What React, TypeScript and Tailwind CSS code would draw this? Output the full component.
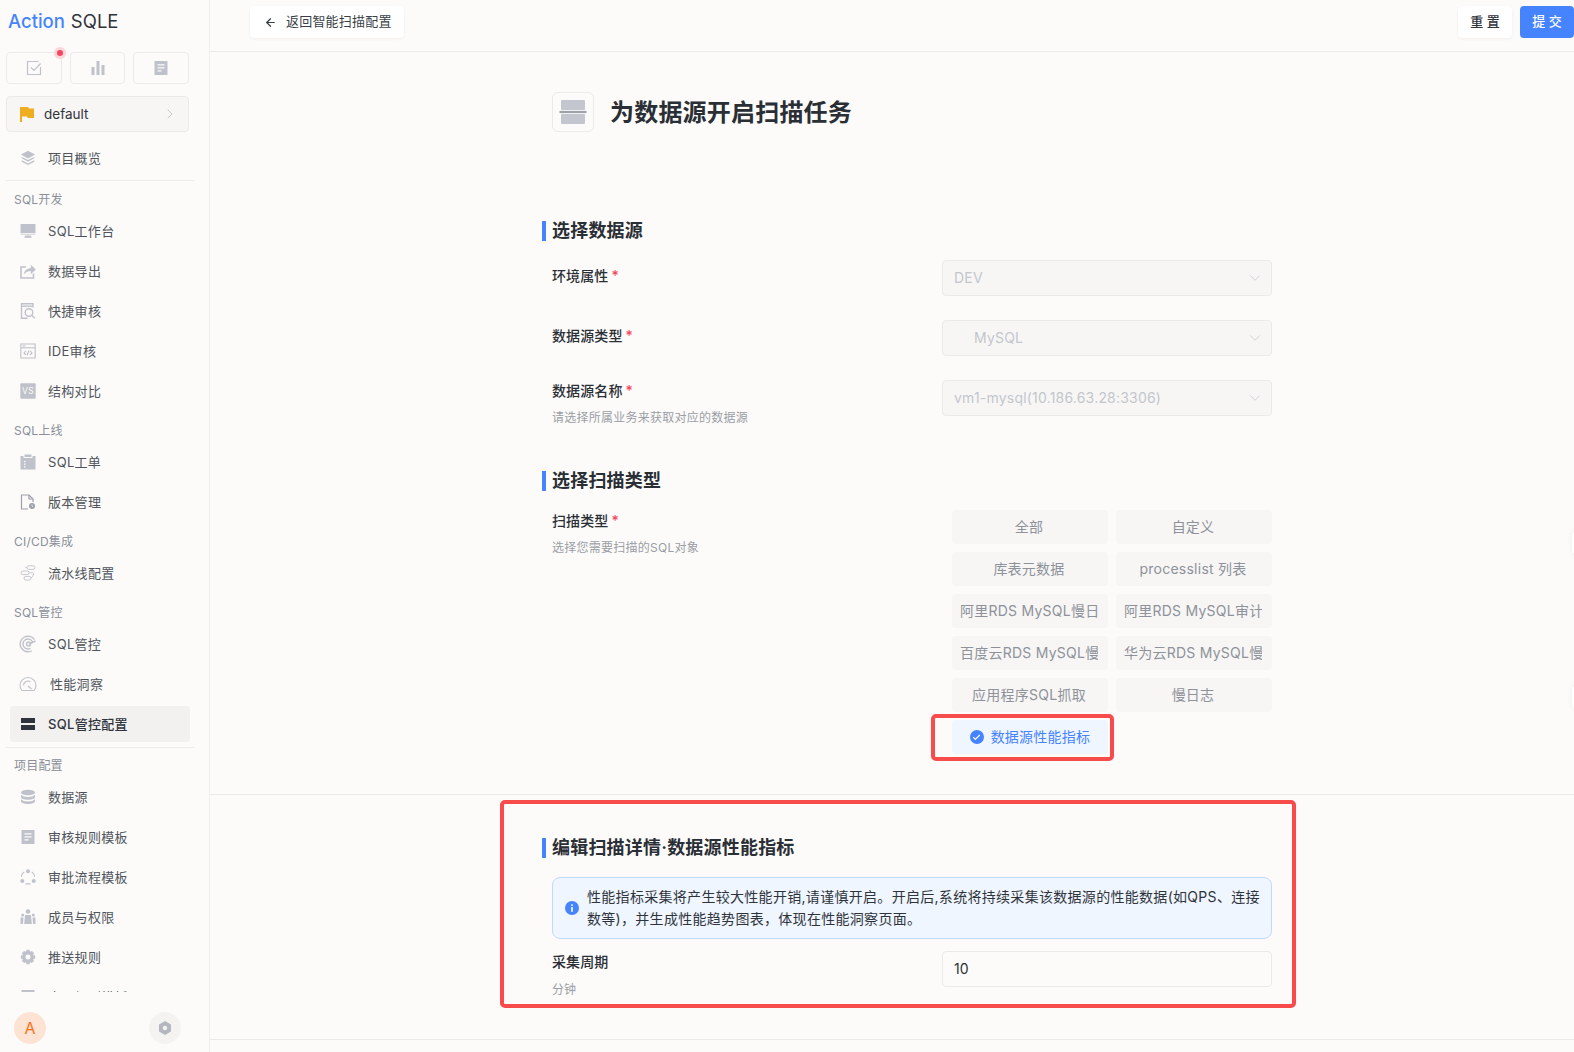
import type { ReactNode } from 'react';
import { ArrowLeft, ChevronDown, ChevronRight, Check } from 'lucide-react';

const ic = 'w-[16px] h-[16px] text-[#bfc2ca]';

const Icons: Record<string, ReactNode> = {
  layers: (
    <svg viewBox="0 0 16 16" className={ic} fill="currentColor">
      <path d="M8 0.800 15 4.600 8 8.400 1 4.600Z" />
      <path d="M2.600 7.200 8 10.100l5.400-2.900 1.400.8L8 11.700 1.200 8Z" />
      <path d="M2.600 10.600 8 13.500l5.400-2.900 1.400.8L8 15.100 1.200 11.400Z" />
    </svg>
  ),
  monitor: (
    <svg viewBox="0 0 16 16" className={ic} fill="currentColor">
      <path d="M0.500 1h15v9h-15Z" />
      <path d="M0.500 10.800h15V12h-15Z" opacity="0.600" />
      <path d="M5.500 12.500h5l1.500 2.200H4Z" />
    </svg>
  ),
  share: (
    <svg viewBox="0 0 16 16" className={ic} fill="none" stroke="currentColor" strokeWidth="1.600">
      <path d="M6 4H1v11h12.500v-4.500" />
      <path d="M3.800 11.500C4.300 7.500 7 5.200 10.800 5.200V1.800L15.800 6.500l-5 4.700V8C8 8 5.600 9 3.800 11.500Z" fill="currentColor" stroke="none" />
    </svg>
  ),
  audit: (
    <svg viewBox="0 0 16 16" className={ic} fill="none" stroke="currentColor" strokeWidth="1.400">
      <path d="M13 4.500V0.800H1.500v14.400h6" />
      <path d="M1.500 3.200H13" />
      <circle cx="9" cy="9.500" r="3.800" />
      <path d="m11.800 12.300 3 2.900" />
    </svg>
  ),
  ide: (
    <svg viewBox="0 0 16 16" className={ic} fill="none" stroke="currentColor" strokeWidth="1.100">
      <path d="M0.800 1h14.400v14H0.800Z" />
      <path d="M0.800 4.800h14.400" />
      <path d="M2.500 2.900h3" />
      <path d="m6 7.800-2 2.100 2 2.100M10 7.800l2 2.100-2 2.100M8.900 7.500l-1.800 4.800" />
    </svg>
  ),
  vs: (
    <svg viewBox="0 0 16 16" className={ic}>
      <rect x="0.300" y="0.300" width="15.400" height="15.400" rx="1" fill="currentColor" />
      <text x="8" y="11" fontSize="8.500" textAnchor="middle" fill="#fcfbf9" fontFamily="Inter, sans-serif">VS</text>
    </svg>
  ),
  clipboard: (
    <svg viewBox="0 0 16 16" className={ic} fill="currentColor">
      <path d="M0.500 2h3v2h9V2h3v13.500H0.500Z" />
      <path d="M4.500 0.500h7V3h-7Z" />
      <path d="M4 7h1.500v1.200H4ZM4 9.600h1.500v1.200H4ZM4 12.200h1.500v1.200H4Z" fill="#fcfbf9" />
    </svg>
  ),
  version: (
    <svg viewBox="0 0 16 16" className={ic} fill="none" stroke="#9ca0a8" strokeWidth="1.200">
      <path d="M8 15H1.500V1H9l4 4v3" />
      <path d="M9 1v4h4" />
      <circle cx="12" cy="12" r="3" fill="#9ca0a8" stroke="none" />
      <path d="M12 10.500V12l1 .8" stroke="#fcfbf9" strokeWidth="0.800" />
    </svg>
  ),
  pipeline: (
    <svg viewBox="0 0 16 16" className={ic} fill="none" stroke="currentColor" strokeWidth="0.900">
      <rect x="7" y="0.800" width="8" height="3.600" rx="1.800" />
      <rect x="1" y="6" width="8" height="3.600" rx="1.800" />
      <rect x="4" y="11.400" width="7" height="3.600" rx="1.800" />
      <path d="M7 2.600H5.500M9 7.800h3.500c1.500 0 1.500 3-1.500 5.300" />
    </svg>
  ),
  radar: (
    <svg viewBox="0 0 18 18" className="w-[18px] h-[18px] text-[#bfc2ca]" fill="none" stroke="currentColor" strokeWidth="1.400">
      <circle cx="9" cy="9" r="7.800" strokeDasharray="36 13" transform="rotate(60 9 9)" />
      <circle cx="9" cy="9" r="5" strokeDasharray="24 8" transform="rotate(60 9 9)" />
      <circle cx="9.500" cy="9" r="2" />
      <path d="m10 9 6.500-3" />
    </svg>
  ),
  gauge: (
    <svg viewBox="0 0 18 18" className="w-[18px] h-[18px] text-[#bfc2ca]" fill="none" stroke="currentColor" strokeWidth="1.100">
      <path d="M3 15.500h12c1.200-1.300 2-3 2-5A8 8 0 0 0 1 10.500c0 2 .8 3.700 2 5Z" />
      <path d="M4.500 10.500a4.500 4.500 0 0 1 7-3.700M9 11l3.500 3" />
    </svg>
  ),
  config: (
    <svg viewBox="0 0 16 16" className="w-[16px] h-[16px] text-[#2f343c]" fill="currentColor">
      <path d="M1 2h14v5H1ZM1 9h14v5H1Z" />
    </svg>
  ),
  database: (
    <svg viewBox="0 0 16 16" className={ic} fill="currentColor">
      <ellipse cx="8" cy="3.500" rx="7" ry="2.800" />
      <path d="M1 5.600c1 1.700 3.800 2.500 7 2.500s6-.8 7-2.500v2.300C15 9.600 12 10.700 8 10.700S1 9.600 1 7.900Z" />
      <path d="M1 10c1 1.700 3.800 2.500 7 2.500s6-.8 7-2.500v2.300C15 14 12 15 8 15s-7-1-7-2.700Z" />
    </svg>
  ),
  doc: (
    <svg viewBox="0 0 16 16" className={ic} fill="currentColor">
      <path d="M1.500 1h13v14h-13Z" />
      <path d="M4.500 4.200h7v1.300h-7ZM4.500 7.200h7v1.300h-7ZM4.500 10.200h4v1.300h-4Z" fill="#fcfbf9" />
    </svg>
  ),
  flow: (
    <svg viewBox="0 0 16 16" className={ic} fill="currentColor">
      <circle cx="8" cy="2.200" r="2" />
      <circle cx="2.300" cy="12" r="2" />
      <circle cx="13.700" cy="12" r="2" />
      <path d="M4.700 3.300 4 2.400C2.200 3.600 1 5.500.8 7.700h1.100c.2-1.800 1.300-3.400 2.800-4.400ZM11.300 3.300l.7-.9c1.800 1.200 3 3.100 3.200 5.300h-1.100c-.2-1.800-1.300-3.400-2.800-4.400ZM5.500 14.300h5v1.100h-5Z" />
    </svg>
  ),
  team: (
    <svg viewBox="0 0 16 16" className={ic} fill="currentColor">
      <circle cx="8" cy="2.500" r="2.300" />
      <circle cx="2.700" cy="6" r="1.500" />
      <circle cx="13.300" cy="6" r="1.500" />
      <path d="M5 6h6l.8 9H4.200ZM0.500 8.500h3L3 15H0.500ZM12.500 8.500h3V15H13Z" />
    </svg>
  ),
  gear: (
    <svg viewBox="0 0 16 16" className={ic} fill="currentColor">
      <path fillRule="evenodd" d="M6.500 0.800h3l.5 2 1.900-.8 2.100 2.100-.9 1.900 2 .5v3l-2 .6.900 1.800-2.100 2.100-1.900-.8-.5 2h-3l-.5-2-1.900.8-2.100-2.100.9-1.800-2-.6v-3l2-.5-.9-1.900 2.100-2.100 1.900.8ZM8 5.500a2.500 2.500 0 1 0 0 5 2.500 2.500 0 0 0 0-5Z" />
    </svg>
  ),
};

function NavItem({ icon, label, indent }: { icon: string; label: string; indent?: boolean }) {
  return (
    <div className="flex items-center h-10 mx-[10px] px-[10px] text-[13px] tracking-[0.3px] text-[#4f545c]">
      <span className="w-[18px] flex justify-center -ml-[1px]">{Icons[icon]}</span>
      <span className={`pt-[2px] ${indent ? 'ml-[13px]' : 'ml-[11px]'}`}>{label}</span>
    </div>
  );
}

function NavGroup({ label }: { label: string }) {
  return <div className="h-[22px] mt-[9px] pl-[14px] text-[12px] tracking-[0.2px] leading-[22px] text-[#8a8f99]">{label}</div>;
}

function Sidebar() {
  return (
    <aside className="w-[210px] h-full shrink-0 border-r border-[#f0efed] flex flex-col">
      <div className="h-[42px] pl-[8px] text-[18.500px] leading-[42px] font-medium">
        <span className="text-[#4583ff]">Action</span> <span className="ml-[1px] text-[#2f343c] font-normal">SQLE</span>
      </div>
      <div className="flex gap-[8px] mt-[10px] ml-[6px] relative w-[183px]">
        {[
          <svg key="a" viewBox="0 0 16 16" className={ic} fill="none" stroke="currentColor" strokeWidth="1.200"><path d="M14.500 7v7.500h-13v-13h11" /><path d="m5 7.500 3 3 6.500-7" /></svg>,
          <svg key="b" viewBox="0 0 16 16" className={ic} fill="currentColor"><path d="M1.500 7h3v8h-3ZM6.500 1h3v14h-3ZM11.500 5h3v10h-3Z" /></svg>,
          Icons.doc,
        ].map((icon, i) => (
          <div key={i} className="flex-1 h-[32px] border border-[#ebeaea] rounded-[4px] flex items-center justify-center">
            {icon}
          </div>
        ))}
        <span className="absolute left-[48px] -top-[5px] w-[12px] h-[12px] rounded-full bg-[#fbd5da] flex items-center justify-center">
          <span className="w-[6px] h-[6px] rounded-full bg-[#f5455f]" />
        </span>
      </div>
      <div className="mt-[12px] ml-[6px] w-[183px] h-[36px] bg-[#f7f6f5] border border-[#ebeaea] rounded-[4px] flex items-center pl-[13px] pr-[10px]">
        <svg viewBox="0 0 14 15" className="w-[14px] h-[15px] text-[#efae1f]" fill="currentColor">
          <path d="M0 0h8l1 1.500h5v9.500H8l-1-1.500H2V15H0Z" />
        </svg>
        <span className="ml-[10px] text-[13.500px] text-[#2f343c]">default</span>
        <ChevronRight className="ml-auto w-[16px] h-[16px] text-[#b9bcc2]" strokeWidth={1.200} />
      </div>
      <div className="flex-1 mt-[6px] min-h-0 overflow-hidden mb-[16px]">
        <NavItem icon="layers" label="项目概览" />
        <div className="mt-[2px] mx-[6px] h-px bg-[#ebeaea] w-[188px]" />
        <div className="h-[22px] mt-[8px] pl-[14px] text-[12px] tracking-[0.2px] leading-[22px] text-[#8a8f99]">SQL开发</div>
        <NavItem icon="monitor" label="SQL工作台" />
        <NavItem icon="share" label="数据导出" />
        <NavItem icon="audit" label="快捷审核" />
        <NavItem icon="ide" label="IDE审核" />
        <NavItem icon="vs" label="结构对比" />
        <NavGroup label="SQL上线" />
        <NavItem icon="clipboard" label="SQL工单" />
        <NavItem icon="version" label="版本管理" />
        <NavGroup label="CI/CD集成" />
        <NavItem icon="pipeline" label="流水线配置" />
        <NavGroup label="SQL管控" />
        <NavItem icon="radar" label="SQL管控" />
        <NavItem icon="gauge" label="性能洞察" indent />
        <div className="flex items-center w-[180px] h-[36px] mt-[2px] mx-[10px] px-[10px] bg-[#f2f1f0] rounded-[4px] text-[13px] tracking-[0.3px] font-medium text-[#2f343c]">
          <span className="w-[18px] flex justify-center -ml-[1px]">{Icons.config}</span>
          <span className="ml-[11px] pt-[2px]">SQL管控配置</span>
        </div>
        <div className="mt-[5px] mx-[6px] h-px bg-[#ebeaea] w-[188px]" />
        <div className="h-[22px] mt-[7px] pl-[14px] text-[12px] tracking-[0.2px] leading-[22px] text-[#8a8f99]">项目配置</div>
        <NavItem icon="database" label="数据源" />
        <NavItem icon="doc" label="审核规则模板" />
        <NavItem icon="flow" label="审批流程模板" />
        <NavItem icon="team" label="成员与权限" />
        <NavItem icon="gear" label="推送规则" />
        <NavItem icon="doc" label="全局规则模板" />
      </div>
      <div className="h-[40px] mb-[4px] pl-[14px] pr-[28px] flex items-center justify-between">
        <div className="w-[32px] h-[32px] rounded-full bg-[#fde3d3] text-[#f97316] text-[16px] flex items-center justify-center">A</div>
        <div className="w-[32px] h-[32px] rounded-full bg-[#f4f3f2] flex items-center justify-center">
          <svg viewBox="0 0 16 16" className="w-[16px] h-[16px] text-[#b4b7be]" fill="currentColor">
            <path fillRule="evenodd" d="M8 1l6 3.500v7L8 15l-6-3.500v-7ZM8 5.800a2.200 2.200 0 1 0 0 4.400 2.200 2.200 0 0 0 0-4.400Z" />
          </svg>
        </div>
      </div>
    </aside>
  );
}

function SectionTitle({ children }: { children: ReactNode }) {
  return (
    <div className="flex items-center h-[20px]">
      <span className="w-[4px] h-[20px] bg-[#4583ff]" />
      <h2 className="ml-[6px] pb-[2px] text-[18px] tracking-[0.2px] font-semibold text-[#2a2e35]">{children}</h2>
    </div>
  );
}

function Req() {
  return <span className="ml-[3px] text-[#f5455f]">*</span>;
}

function SelectField({ value, indent }: { value: string; indent?: boolean }) {
  return (
    <div className={`w-[330px] h-[36px] shrink-0 bg-[#f7f6f5] border border-[#ebeaea] rounded-[4px] flex items-center pr-[7px] text-[14px] tracking-[0.2px] text-[#c3c6cd] ${indent ? 'pl-[31px]' : 'pl-[11px]'}`}>
      <span className="pb-[2px]">{value}</span>
      <ChevronDown className="ml-auto w-[18px] h-[18px] text-[#c3c6cd]" strokeWidth={1} />
    </div>
  );
}

const scanTypes = [
  '全部',
  '自定义',
  '库表元数据',
  'processlist 列表',
  '阿里RDS MySQL慢日志',
  '阿里RDS MySQL审计日志',
  '百度云RDS MySQL慢日志',
  '华为云RDS MySQL慢日志',
  '应用程序SQL抓取',
  '慢日志',
];

export default function App() {
  return (
    <div className="w-[1574px] h-[1052px] overflow-hidden flex bg-[#fcfbf9] font-['Inter','Noto_Sans_CJK_SC',sans-serif]">
      <Sidebar />
      <main className="relative flex-1 min-w-0 h-full flex flex-col">
        <header className="h-[52px] shrink-0 border-b border-[#ebeaea] flex items-start pt-[6px] pl-[40px]">
          <button className="h-[32px] w-[154px] bg-white rounded-[4px] shadow-[0_1px_3px_rgba(0,0,0,0.06)] flex items-center pl-[14px] text-[13px] tracking-[0.2px] text-[#3a3f47]">
            <ArrowLeft className="w-[13px] h-[13px]" strokeWidth={2.200} />
            <span className="ml-[9px]">返回智能扫描配置</span>
          </button>
          <button className="ml-auto h-[32px] w-[54px] bg-white rounded-[4px] shadow-[0_1px_3px_rgba(0,0,0,0.06)] text-[13px] font-medium text-[#2f343c]">重 置</button>
          <button className="ml-[8px] h-[32px] w-[54px] bg-[#4583ff] rounded-[4px] text-[13px] font-medium text-white">提 交</button>
        </header>

        <div className="ml-[332px] w-[730px] pl-[10px] mt-[40px] flex items-center h-[40px]">
          <div className="w-[42px] h-[40px] border border-[#ebeaea] rounded-[6px] flex items-center justify-center">
            <svg viewBox="0 0 28 24" className="w-[28px] h-[24px]">
              <rect x="2" y="0" width="24" height="10" rx="1" fill="#c3c6cf" />
              <rect x="0.500" y="10.900" width="27" height="2.200" fill="#9da1ab" />
              <rect x="2" y="14" width="24" height="10" rx="1" fill="#c3c6cf" />
            </svg>
          </div>
          <h1 className="ml-[16px] pt-[2px] text-[24px] tracking-[0.2px] font-semibold text-[#2a2e35]">为数据源开启扫描任务</h1>
        </div>

        <section className="ml-[332px] w-[730px] mt-[89px]">
          <SectionTitle>选择数据源</SectionTitle>
          <div className="pl-[10px] mt-[19px] flex flex-col gap-[24px] text-[14px]">
            <div className="flex justify-between">
              <label className="pt-[5px] leading-[22px] tracking-[0.1px] font-medium text-[#2a2e35]">环境属性<Req /></label>
              <SelectField value="DEV" />
            </div>
            <div className="flex justify-between">
              <label className="pt-[5px] leading-[22px] tracking-[0.1px] font-medium text-[#2a2e35]">数据源类型<Req /></label>
              <SelectField value="MySQL" indent />
            </div>
            <div className="flex justify-between h-[46px]">
              <div>
                <label className="block leading-[22px] tracking-[0.1px] font-medium text-[#2a2e35]">数据源名称<Req /></label>
                <p className="mt-[8px] text-[12px] tracking-[0.25px] leading-[16px] text-[#9a9ea6]">请选择所属业务来获取对应的数据源</p>
              </div>
              <SelectField value="vm1-mysql(10.186.63.28:3306)" />
            </div>
          </div>
        </section>

        <section className="ml-[332px] w-[730px] mt-[45px]">
          <SectionTitle>选择扫描类型</SectionTitle>
          <div className="pl-[10px] mt-[19px] flex justify-between text-[14px]">
            <div>
              <label className="block leading-[22px] tracking-[0.1px] font-medium text-[#2a2e35]">扫描类型<Req /></label>
              <p className="mt-[8px] text-[12px] tracking-[0.25px] leading-[16px] text-[#9a9ea6]">选择您需要扫描的SQL对象</p>
            </div>
            <div className="w-[320px] grid grid-cols-2 gap-[8px]">
              {scanTypes.map((name) => (
                <div key={name} className="h-[34px] bg-[#f7f6f5] rounded-[4px] pl-[8px] pr-[10px] flex items-center text-[#8e929a] tracking-[0.25px]">
                  <span className="block w-full overflow-hidden whitespace-nowrap text-center pb-[2px]">{name}</span>
                </div>
              ))}
              <div className="relative h-[34px] bg-[#eff6ff] rounded-[4px] flex items-center justify-center text-[#4583ff] tracking-[0.25px]">
                <span className="w-[14px] h-[14px] rounded-full bg-[#4583ff] flex items-center justify-center">
                  <Check className="w-[9px] h-[9px] text-white" strokeWidth={3} />
                </span>
                <span className="ml-[7px] pb-[2px]">数据源性能指标</span>
                <span className="absolute -left-[21px] -right-[6px] -top-[6px] -bottom-[7px] border-[4px] border-[#f84c4c] rounded-[5px]" />
              </div>
            </div>
          </div>
        </section>

        <section className="relative mt-[40px] h-[246px] border-y border-[#ebeaea]">
          <div className="ml-[332px] w-[730px] mt-[43px]">
            <SectionTitle>编辑扫描详情·数据源性能指标</SectionTitle>
            <div className="pl-[10px] mt-[19px] text-[14px]">
              <div className="h-[62px] border border-[#bfdbfe] bg-[#eff6ff] rounded-[8px] flex items-center pl-[12px] pr-[8px] text-[#2f343c] leading-[22px] tracking-[0.3px]">
                <svg viewBox="0 0 14 14" className="w-[14px] h-[14px] shrink-0">
                  <circle cx="7" cy="7" r="7" fill="#4583ff" />
                  <rect x="6.200" y="6" width="1.600" height="4.800" fill="#fff" />
                  <rect x="6.200" y="3.300" width="1.600" height="1.600" fill="#fff" />
                </svg>
                <p className="ml-[8px]">性能指标采集将产生较大性能开销,请谨慎开启。开启后,系统将持续采集该数据源的性能数据(如QPS、连接数等)，并生成性能趋势图表，体现在性能洞察页面。</p>
              </div>
              <div className="mt-[12px] flex justify-between">
                <div>
                  <label className="block leading-[22px] tracking-[0.1px] font-medium text-[#2a2e35]">采集周期</label>
                  <p className="mt-[9px] text-[12px] leading-[16px] text-[#9a9ea6]">分钟</p>
                </div>
                <div className="w-[330px] h-[36px] border border-[#ebeaea] rounded-[4px] flex items-center pl-[11px] text-[#2a2e35]">
                  <span className="pb-[2px]">10</span>
                </div>
              </div>
            </div>
          </div>
          <span className="absolute left-[290px] w-[796px] top-[5px] h-[208px] border-[4px] border-[#f84c4c] rounded-[5px]" />
        </section>

        <span className="absolute top-[529px] -right-[14px] w-[16px] h-[28px] rounded-full bg-white shadow-[0_0_6px_rgba(0,0,0,0.05)]" />
        <span className="absolute top-[683px] -right-[14px] w-[16px] h-[28px] rounded-full bg-white shadow-[0_0_6px_rgba(0,0,0,0.05)]" />
      </main>
    </div>
  );
}
